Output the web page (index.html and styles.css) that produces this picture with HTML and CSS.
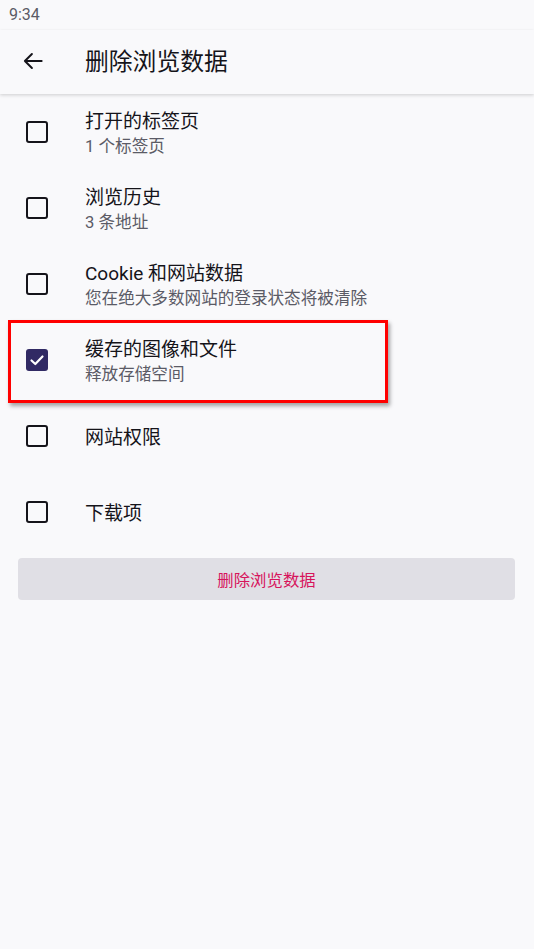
FILE: index.html
```html
<!DOCTYPE html>
<html lang="zh-CN">
<head>
<meta charset="utf-8">
<link rel="stylesheet" href="styles.css">
</head>
<body>
<div class="status">9:34</div>
<header class="toolbar">
  <svg class="back" viewBox="0 0 24 24" width="24" height="24"><path d="M20 12H4.5M11 5.5L4.5 12L11 18.5" fill="none" stroke="#15141a" stroke-width="1.8" stroke-linecap="round" stroke-linejoin="round"/></svg>
  <h1 class="title">删除浏览数据</h1>
</header>
<main class="list">
  <div class="row">
    <span class="box"></span>
    <div class="text"><div class="t1">打开的标签页</div><div class="t2">1 个标签页</div></div>
  </div>
  <div class="row">
    <span class="box"></span>
    <div class="text"><div class="t1">浏览历史</div><div class="t2">3 条地址</div></div>
  </div>
  <div class="row">
    <span class="box"></span>
    <div class="text"><div class="t1">Cookie 和网站数据</div><div class="t2">您在绝大多数网站的登录状态将被清除</div></div>
  </div>
  <div class="row hl">
    <span class="box checked"><svg viewBox="0 0 22 22" width="22" height="22"><path d="M5.5 11.5L9.3 15L16.5 7.5" fill="none" stroke="#fff" stroke-width="2.2" stroke-linecap="round" stroke-linejoin="round"/></svg></span>
    <div class="text"><div class="t1">缓存的图像和文件</div><div class="t2">释放存储空间</div></div>
    <div class="mark"></div>
  </div>
  <div class="row">
    <span class="box"></span>
    <div class="text"><div class="t1">网站权限</div></div>
  </div>
  <div class="row">
    <span class="box"></span>
    <div class="text"><div class="t1">下载项</div></div>
  </div>
  <div class="btnwrap"><button class="btn">删除浏览数据</button></div>
</main>
</body>
</html>
```
FILE: styles.css
```css
html, body {
  margin: 0;
  padding: 0;
  background: #f9f9fb;
  font-family: Roboto, "Noto Sans CJK SC", sans-serif;
  color: #15141a;
}
body {
  width: 534px;
  height: 949px;
  overflow: hidden;
}
.status {
  height: 30px;
  padding-left: 9px;
  font-size: 16px;
  line-height: 29px;
  color: #5b5b66;
}
.toolbar {
  height: 64px;
  display: flex;
  align-items: center;
  background: #f9f9fb;
  box-shadow: 0 1px 3px rgba(0,0,0,0.12), 0 2px 4px rgba(0,0,0,0.05);
  position: relative;
  z-index: 1;
}
.back {
  margin-left: 20px;
  width: 26px;
  height: 26px;
  margin-top: -2px;
}
.title {
  margin: 0 0 0 39px;
  font-size: 23.8px;
  font-weight: 400;
  line-height: 30px;
  margin-top: 0;
}
.list {
  display: flex;
  flex-direction: column;
}
.row {
  height: 76px;
  display: flex;
  align-items: center;
  position: relative;
}
.box {
  box-sizing: border-box;
  width: 22px;
  height: 22px;
  border: 2.6px solid #15141a;
  border-radius: 3px;
  margin-left: 26px;
  flex: none;
  display: flex;
  align-items: center;
  justify-content: center;
}
.box.checked {
  background: #312a64;
  border: none;
}
.text {
  margin-left: 37px;
  padding-top: 3px;
  display: flex;
  flex-direction: column;
}
.t1 {
  font-size: 19px;
  line-height: 25px;
}
.t2 {
  margin-top: 2px;
  font-size: 16.6px;
  line-height: 22px;
  color: #5b5b66;
}
.mark {
  position: absolute;
  left: 8px;
  top: -2px;
  width: 380px;
  height: 83px;
  box-sizing: border-box;
  border: 3.4px solid #ff0000;
  box-shadow: 2px 3px 4px rgba(0,0,0,0.35);
}
.btnwrap {
  padding: 8px 19px 0 18px;
}
.btn {
  width: 100%;
  height: 42px;
  border: none;
  border-radius: 4px;
  background: #e0dfe5;
  color: #d7145c;
  font-family: Roboto, "Noto Sans CJK SC", sans-serif;
  font-size: 16.4px;
  padding: 0;
}
```
